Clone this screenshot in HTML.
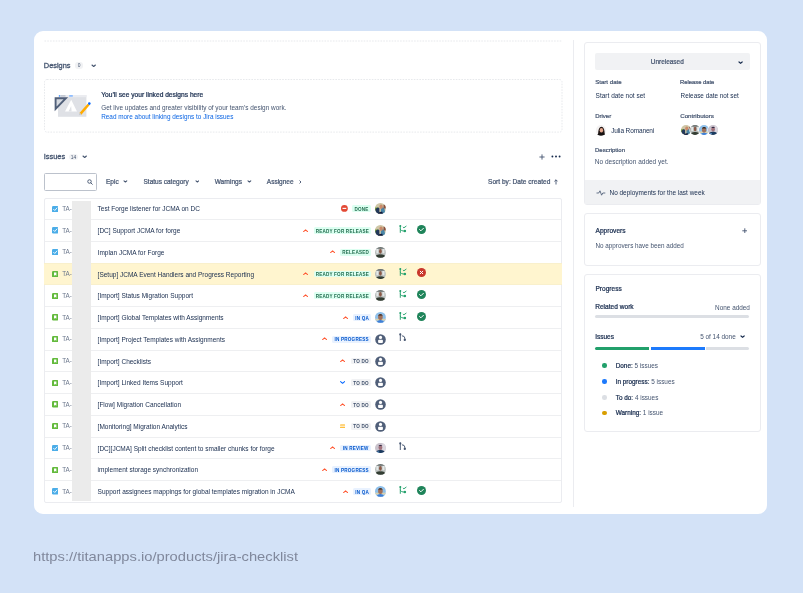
<!DOCTYPE html>
<html><head><meta charset="utf-8"><style>
html,body{margin:0;padding:0}
body{width:803px;height:593px;overflow:hidden;background:#d3e2f7;position:relative;font-family:"Liberation Sans",sans-serif}
#w{position:absolute;left:0;top:0;width:803px;height:593px;will-change:transform}
.t{position:absolute;white-space:nowrap}
svg{display:block}
</style></head><body><div id="w">
<div style="position:absolute;left:33.50px;top:30.80px;width:733.80px;height:483.20px;background:#fff;border-radius:9px"></div>
<svg style="position:absolute;left:44.00px;top:39.50px" width="518" height="2" viewBox="0 0 518 2"><path d="M0.5 1 H517.6" stroke="#e4e6ea" stroke-width="0.9" stroke-dasharray="1.6 1.2"/></svg>
<div style="position:absolute;left:573.20px;top:39.90px;width:1.00px;height:466.90px;background:#ebecf0"></div>
<div class="t" style="left:43.80px;top:61.74px;font-size:7.4px;line-height:7.4px;font-weight:400;-webkit-text-stroke:0.22px #44546f;color:#44546f;-webkit-text-stroke-width:0.3px">Designs</div>
<div style="position:absolute;left:75.20px;top:62.00px;width:7.80px;height:7.20px;background:#f1f2f4;border-radius:3px"></div>
<div class="t" style="left:79.10px;transform:translateX(-50%);top:64.45px;font-size:4.9px;line-height:4.9px;font-weight:400;color:#44546f;">0</div>
<svg style="position:absolute;left:90.70px;top:62.90px" width="5.4" height="5.4" viewBox="0 0 5.4 5.4"><path d="M1 2.02 L2.7 3.448 L4.4 2.02" fill="none" stroke="#44546f" stroke-width="1.15" stroke-linecap="round" stroke-linejoin="round"/></svg>
<svg style="position:absolute;left:44.00px;top:79.00px" width="519" height="54" viewBox="0 0 519 54"><rect x="0.5" y="0.5" width="517.5" height="52.6" rx="2.5" fill="none" stroke="#e4e6ea" stroke-width="0.9" stroke-dasharray="1.6 1.2"/></svg>
<svg style="position:absolute;left:54.00px;top:93.00px" width="38" height="26" viewBox="0 0 38 26">
<rect x="4" y="2" width="28.4" height="21.8" fill="#dfe1e6"/>
<rect x="4" y="2" width="28.4" height="2.2" fill="#ebecf0"/>
<rect x="5" y="2.1" width="1.2" height="1.6" fill="#4c9aff"/>
<rect x="6.5" y="2.1" width="5" height="1.6" fill="#c1c7d0"/>
<rect x="15.2" y="2.1" width="3.6" height="1.6" fill="#85b8ff"/>
<path d="M1.6 5.2 L11.9 5.2 L1.6 15.8 Z" fill="#d5d9e0" stroke="#505f79" stroke-width="1.9" stroke-linejoin="miter"/>
<path d="M11 18.5 L17.2 6.8 L23 18.5 Z" fill="#fff"/>
<path d="M14.5 18.5 L17.2 13 L17.6 18.5Z" fill="#dfe1e6"/>
<path d="M26.4 20.8 L34.6 11.5" stroke="#ffab00" stroke-width="2.5" stroke-linecap="butt"/>
<path d="M25.5 21.8 L26.6 20.6" stroke="#c1c7d0" stroke-width="1.5"/>
<circle cx="35.3" cy="10.6" r="1.3" fill="#0065ff"/>
</svg>
<div class="t" style="left:101.20px;top:91.77px;font-size:6.65px;line-height:6.65px;font-weight:400;-webkit-text-stroke:0.22px #172b4d;color:#172b4d;">You’ll see your linked designs here</div>
<div class="t" style="left:101.20px;top:104.94px;font-size:6.45px;line-height:6.45px;font-weight:400;color:#44546f;">Get live updates and greater visibility of your team’s design work.</div>
<div class="t" style="left:101.20px;top:113.78px;font-size:6.4px;line-height:6.4px;font-weight:400;color:#0c66e4;">Read more about linking designs to Jira issues</div>
<div class="t" style="left:43.80px;top:153.34px;font-size:7.4px;line-height:7.4px;font-weight:400;-webkit-text-stroke:0.22px #44546f;color:#44546f;-webkit-text-stroke-width:0.3px">Issues</div>
<div style="position:absolute;left:69.10px;top:153.60px;width:8.70px;height:6.70px;background:#f1f2f4;border-radius:3px"></div>
<div class="t" style="left:73.45px;transform:translateX(-50%);top:155.65px;font-size:4.9px;line-height:4.9px;font-weight:400;color:#44546f;">14</div>
<svg style="position:absolute;left:82.30px;top:154.10px" width="5.4" height="5.4" viewBox="0 0 5.4 5.4"><path d="M1 2.02 L2.7 3.448 L4.4 2.02" fill="none" stroke="#44546f" stroke-width="1.15" stroke-linecap="round" stroke-linejoin="round"/></svg>
<svg style="position:absolute;left:538.60px;top:154.00px" width="6" height="6" viewBox="0 0 6 6"><path d="M3 0.4 V5.6 M0.4 3 H5.6" stroke="#44546f" stroke-width="0.9"/></svg>
<svg style="position:absolute;left:550.50px;top:155.00px" width="10" height="3" viewBox="0 0 10 3"><circle cx="1.4" cy="1.5" r="0.95" fill="#172b4d"/><circle cx="5" cy="1.5" r="0.95" fill="#172b4d"/><circle cx="8.6" cy="1.5" r="0.95" fill="#172b4d"/></svg>
<div style="position:absolute;left:44.10px;top:173.10px;width:52.90px;height:17.50px;border:1.2px solid #bcc2cc;border-radius:1.5px;box-sizing:border-box"></div>
<svg style="position:absolute;left:86.80px;top:178.90px" width="6" height="6" viewBox="0 0 6 6"><circle cx="2.5" cy="2.5" r="1.75" fill="none" stroke="#505f79" stroke-width="1.0"/><path d="M3.8 3.8 L5.3 5.3" stroke="#505f79" stroke-width="1.0" stroke-linecap="round"/></svg>
<div class="t" style="left:106.00px;top:179.10px;font-size:6.5px;line-height:6.5px;font-weight:400;-webkit-text-stroke:0.22px #44546f;color:#44546f;">Epic</div>
<svg style="position:absolute;left:123.30px;top:179.40px" width="4.8" height="4.8" viewBox="0 0 4.8 4.8"><path d="M1 1.8399999999999999 L2.4 3.016 L3.8 1.8399999999999999" fill="none" stroke="#44546f" stroke-width="1.05" stroke-linecap="round" stroke-linejoin="round"/></svg>
<div class="t" style="left:143.50px;top:179.10px;font-size:6.5px;line-height:6.5px;font-weight:400;-webkit-text-stroke:0.22px #44546f;color:#44546f;">Status category</div>
<svg style="position:absolute;left:194.50px;top:179.40px" width="4.8" height="4.8" viewBox="0 0 4.8 4.8"><path d="M1 1.8399999999999999 L2.4 3.016 L3.8 1.8399999999999999" fill="none" stroke="#44546f" stroke-width="1.05" stroke-linecap="round" stroke-linejoin="round"/></svg>
<div class="t" style="left:214.70px;top:179.10px;font-size:6.5px;line-height:6.5px;font-weight:400;-webkit-text-stroke:0.22px #44546f;color:#44546f;">Warnings</div>
<svg style="position:absolute;left:246.80px;top:179.40px" width="4.8" height="4.8" viewBox="0 0 4.8 4.8"><path d="M1 1.8399999999999999 L2.4 3.016 L3.8 1.8399999999999999" fill="none" stroke="#44546f" stroke-width="1.05" stroke-linecap="round" stroke-linejoin="round"/></svg>
<div class="t" style="left:266.80px;top:179.10px;font-size:6.5px;line-height:6.5px;font-weight:400;-webkit-text-stroke:0.22px #44546f;color:#44546f;">Assignee</div>
<svg style="position:absolute;left:299.20px;top:179.80px" width="3" height="4" viewBox="0 0 3 4"><path d="M0.8 0.8 L2 2 L0.8 3.2" fill="none" stroke="#44546f" stroke-width="0.9" stroke-linecap="round"/></svg>
<div class="t" style="right:252.70px;top:179.01px;font-size:6.6px;line-height:6.6px;font-weight:400;-webkit-text-stroke:0.22px #44546f;color:#44546f;">Sort by: Date created</div>
<svg style="position:absolute;left:554.00px;top:178.80px" width="4" height="6" viewBox="0 0 4 6"><path d="M2 5.5 V0.8 M0.4 2.4 L2 0.8 L3.6 2.4" fill="none" stroke="#44546f" stroke-width="0.9"/></svg>
<div style="position:absolute;left:44.30px;top:197.90px;width:517.70px;height:304.70px;border:1px solid #ebecf0;box-sizing:border-box;border-radius:2px"></div>
<svg style="position:absolute;left:51.70px;top:205.58px" width="6.4" height="6.4" viewBox="0 0 6.4 6.4"><rect width="6.4" height="6.4" rx="1.2" fill="#4bade8"/><path d="M1.6 3.3 L2.8 4.5 L4.9 2" fill="none" stroke="#fff" stroke-width="0.9" stroke-linecap="round" stroke-linejoin="round"/></svg>
<div class="t" style="left:62.20px;top:205.84px;font-size:6.3px;line-height:6.3px;font-weight:400;color:#6b778c;">TA-</div>
<div class="t" style="left:97.60px;top:206.27px;font-size:6.5px;line-height:6.5px;font-weight:400;color:#172b4d;">Test Forge listener for JCMA on DC</div>
<div style="position:absolute;left:352.00px;top:205.38px;width:18.70px;height:6.80px;background:#dcfff1;border-radius:1.5px"></div>
<div class="t" style="left:361.45px;transform:translateX(-50%);top:207.83px;font-size:4.6px;line-height:4.6px;font-weight:700;color:#216e4e;letter-spacing:0.2px">DONE</div>
<svg style="position:absolute;left:341.10px;top:205.38px" width="6.8" height="6.8" viewBox="0 0 6.8 6.8"><circle cx="3.4" cy="3.4" r="3.4" fill="#e34935"/><rect x="1.5" y="2.85" width="3.8" height="1.1" fill="#fff"/></svg>
<div style="position:absolute;left:375.00px;top:203.28px;width:10.8px;height:10.8px;border-radius:50%;overflow:hidden"><svg width="10.8" height="10.8" viewBox="0 0 12 12" preserveAspectRatio="none"><rect width="12" height="12" fill="#cfc6a6"/><rect x="0" y="5" width="3.5" height="3.5" fill="#79a040"/><path d="M0.5 7 Q2.5 4 4.8 5.5 L5 12 H0 Z" fill="#23395a"/><path d="M6.5 5 Q9 4 10.5 6 L11.5 12 H6.5 Z" fill="#4a86a8"/><ellipse cx="6.8" cy="4.2" rx="1.9" ry="2.4" fill="#c98a6a"/><path d="M3 12 Q5 9 8 9.8 L9 12 Z" fill="#121a3a"/><rect x="9.5" y="2" width="2.5" height="4" fill="#8a5040"/></svg></div>
<div style="position:absolute;left:45.30px;top:219.15px;width:515.70px;height:1.00px;background:#eeeff1"></div>
<svg style="position:absolute;left:51.70px;top:227.33px" width="6.4" height="6.4" viewBox="0 0 6.4 6.4"><rect width="6.4" height="6.4" rx="1.2" fill="#4bade8"/><path d="M1.6 3.3 L2.8 4.5 L4.9 2" fill="none" stroke="#fff" stroke-width="0.9" stroke-linecap="round" stroke-linejoin="round"/></svg>
<div class="t" style="left:62.20px;top:227.59px;font-size:6.3px;line-height:6.3px;font-weight:400;color:#6b778c;">TA-</div>
<div class="t" style="left:97.60px;top:228.02px;font-size:6.5px;line-height:6.5px;font-weight:400;color:#172b4d;">[DC] Support JCMA for forge</div>
<div style="position:absolute;left:313.70px;top:227.12px;width:57.00px;height:6.80px;background:#dcfff1;border-radius:1.5px"></div>
<div class="t" style="left:342.30px;transform:translateX(-50%);top:229.58px;font-size:4.6px;line-height:4.6px;font-weight:700;color:#216e4e;letter-spacing:0.2px">READY FOR RELEASE</div>
<svg style="position:absolute;left:303.00px;top:228.53px" width="5.2" height="3.2" viewBox="0 0 5.2 3.2"><path d="M0.6 2.6 L2.6 0.9 L4.6 2.6" fill="none" stroke="#ff5630" stroke-width="1.05" stroke-linecap="round" stroke-linejoin="round"/></svg>
<div style="position:absolute;left:375.00px;top:225.03px;width:10.8px;height:10.8px;border-radius:50%;overflow:hidden"><svg width="10.8" height="10.8" viewBox="0 0 12 12" preserveAspectRatio="none"><rect width="12" height="12" fill="#cfc6a6"/><rect x="0" y="5" width="3.5" height="3.5" fill="#79a040"/><path d="M0.5 7 Q2.5 4 4.8 5.5 L5 12 H0 Z" fill="#23395a"/><path d="M6.5 5 Q9 4 10.5 6 L11.5 12 H6.5 Z" fill="#4a86a8"/><ellipse cx="6.8" cy="4.2" rx="1.9" ry="2.4" fill="#c98a6a"/><path d="M3 12 Q5 9 8 9.8 L9 12 Z" fill="#121a3a"/><rect x="9.5" y="2" width="2.5" height="4" fill="#8a5040"/></svg></div>
<svg style="position:absolute;left:399.00px;top:224.53px" width="8" height="9" viewBox="0 0 8 9"><g fill="none" stroke="#22a06b" stroke-width="0.95" stroke-linecap="round"><path d="M1.3 1 V7.4"/><path d="M1.3 4.2 Q1.5 6.1 5.6 6.1"/><path d="M4.2 2.2 L4.9 2.8 L7.1 1.2"/></g><circle cx="1.3" cy="1.0" r="1.0" fill="#22a06b"/><circle cx="5.9" cy="6.1" r="1.25" fill="#22a06b"/></svg>
<svg style="position:absolute;left:417.30px;top:224.72px" width="9" height="9" viewBox="0 0 9 9"><circle cx="4.5" cy="4.5" r="4.5" fill="#1f845a"/><path d="M2.6 4.6 L3.9 5.8 L6.4 3.3" fill="none" stroke="#fff" stroke-width="1" stroke-linecap="round" stroke-linejoin="round"/></svg>
<div style="position:absolute;left:45.30px;top:240.90px;width:515.70px;height:1.00px;background:#eeeff1"></div>
<svg style="position:absolute;left:51.70px;top:249.07px" width="6.4" height="6.4" viewBox="0 0 6.4 6.4"><rect width="6.4" height="6.4" rx="1.2" fill="#4bade8"/><path d="M1.6 3.3 L2.8 4.5 L4.9 2" fill="none" stroke="#fff" stroke-width="0.9" stroke-linecap="round" stroke-linejoin="round"/></svg>
<div class="t" style="left:62.20px;top:249.34px;font-size:6.3px;line-height:6.3px;font-weight:400;color:#6b778c;">TA-</div>
<div class="t" style="left:97.60px;top:249.77px;font-size:6.5px;line-height:6.5px;font-weight:400;color:#172b4d;">Implan JCMA for Forge</div>
<div style="position:absolute;left:340.40px;top:248.87px;width:30.30px;height:6.80px;background:#dcfff1;border-radius:1.5px"></div>
<div class="t" style="left:355.65px;transform:translateX(-50%);top:251.33px;font-size:4.6px;line-height:4.6px;font-weight:700;color:#216e4e;letter-spacing:0.2px">RELEASED</div>
<svg style="position:absolute;left:329.70px;top:250.27px" width="5.2" height="3.2" viewBox="0 0 5.2 3.2"><path d="M0.6 2.6 L2.6 0.9 L4.6 2.6" fill="none" stroke="#ff5630" stroke-width="1.05" stroke-linecap="round" stroke-linejoin="round"/></svg>
<div style="position:absolute;left:375.00px;top:246.77px;width:10.8px;height:10.8px;border-radius:50%;overflow:hidden"><svg width="10.8" height="10.8" viewBox="0 0 12 12" preserveAspectRatio="none"><rect width="12" height="12" fill="#b8bdbb"/><rect x="1.5" y="1" width="2.2" height="6" fill="#e4e8e8"/><rect x="8.3" y="1" width="2.2" height="6" fill="#e4e8e8"/><rect x="0" y="0" width="12" height="2" fill="#6f7674"/><ellipse cx="6" cy="4.8" rx="1.5" ry="2.6" fill="#8c5a48"/><path d="M0 12 Q1 8 6 8.2 Q11 8 12 12 Z" fill="#333d33"/></svg></div>
<div style="position:absolute;left:44.30px;top:262.75px;width:517.70px;height:22.55px;background:#fff5cf;box-shadow:inset 0 0.6px 0 #f4ecca, inset 0 -0.6px 0 #f4ecca"></div>
<svg style="position:absolute;left:51.70px;top:270.82px" width="6.4" height="6.4" viewBox="0 0 6.4 6.4"><rect width="6.4" height="6.4" rx="1.2" fill="#63ba3c"/><path d="M2 1.6 H4.4 V4.8 L3.2 4 L2 4.8 Z" fill="#fff"/></svg>
<div class="t" style="left:62.20px;top:271.09px;font-size:6.3px;line-height:6.3px;font-weight:400;color:#6b778c;">TA-</div>
<div class="t" style="left:97.60px;top:271.52px;font-size:6.5px;line-height:6.5px;font-weight:400;color:#172b4d;">[Setup] JCMA Event Handlers and Progress Reporting</div>
<div style="position:absolute;left:313.70px;top:270.62px;width:57.00px;height:6.80px;background:#dcfff1;border-radius:1.5px"></div>
<div class="t" style="left:342.30px;transform:translateX(-50%);top:273.08px;font-size:4.6px;line-height:4.6px;font-weight:700;color:#216e4e;letter-spacing:0.2px">READY FOR RELEASE</div>
<svg style="position:absolute;left:303.00px;top:272.02px" width="5.2" height="3.2" viewBox="0 0 5.2 3.2"><path d="M0.6 2.6 L2.6 0.9 L4.6 2.6" fill="none" stroke="#ff5630" stroke-width="1.05" stroke-linecap="round" stroke-linejoin="round"/></svg>
<div style="position:absolute;left:375.00px;top:268.52px;width:10.8px;height:10.8px;border-radius:50%;overflow:hidden"><svg width="10.8" height="10.8" viewBox="0 0 12 12" preserveAspectRatio="none"><rect width="12" height="12" fill="#b8bdbb"/><rect x="1.5" y="1" width="2.2" height="6" fill="#e4e8e8"/><rect x="8.3" y="1" width="2.2" height="6" fill="#e4e8e8"/><rect x="0" y="0" width="12" height="2" fill="#6f7674"/><ellipse cx="6" cy="4.8" rx="1.5" ry="2.6" fill="#8c5a48"/><path d="M0 12 Q1 8 6 8.2 Q11 8 12 12 Z" fill="#333d33"/></svg></div>
<svg style="position:absolute;left:399.00px;top:268.02px" width="8" height="9" viewBox="0 0 8 9"><g fill="none" stroke="#22a06b" stroke-width="0.95" stroke-linecap="round"><path d="M1.3 1 V7.4"/><path d="M1.3 4.2 Q1.5 6.1 5.6 6.1"/><path d="M4.2 2.2 L4.9 2.8 L7.1 1.2"/></g><circle cx="1.3" cy="1.0" r="1.0" fill="#22a06b"/><circle cx="5.9" cy="6.1" r="1.25" fill="#22a06b"/></svg>
<svg style="position:absolute;left:417.30px;top:268.22px" width="9" height="9" viewBox="0 0 9 9"><circle cx="4.5" cy="4.5" r="4.5" fill="#c9372c"/><path d="M3.2 3.2 L5.8 5.8 M5.8 3.2 L3.2 5.8" fill="none" stroke="#fff" stroke-width="1" stroke-linecap="round"/></svg>
<svg style="position:absolute;left:51.70px;top:292.57px" width="6.4" height="6.4" viewBox="0 0 6.4 6.4"><rect width="6.4" height="6.4" rx="1.2" fill="#63ba3c"/><path d="M2 1.6 H4.4 V4.8 L3.2 4 L2 4.8 Z" fill="#fff"/></svg>
<div class="t" style="left:62.20px;top:292.84px;font-size:6.3px;line-height:6.3px;font-weight:400;color:#6b778c;">TA-</div>
<div class="t" style="left:97.60px;top:293.27px;font-size:6.5px;line-height:6.5px;font-weight:400;color:#172b4d;">[Import] Status Migration Support</div>
<div style="position:absolute;left:313.70px;top:292.38px;width:57.00px;height:6.80px;background:#dcfff1;border-radius:1.5px"></div>
<div class="t" style="left:342.30px;transform:translateX(-50%);top:294.83px;font-size:4.6px;line-height:4.6px;font-weight:700;color:#216e4e;letter-spacing:0.2px">READY FOR RELEASE</div>
<svg style="position:absolute;left:303.00px;top:293.77px" width="5.2" height="3.2" viewBox="0 0 5.2 3.2"><path d="M0.6 2.6 L2.6 0.9 L4.6 2.6" fill="none" stroke="#ff5630" stroke-width="1.05" stroke-linecap="round" stroke-linejoin="round"/></svg>
<div style="position:absolute;left:375.00px;top:290.27px;width:10.8px;height:10.8px;border-radius:50%;overflow:hidden"><svg width="10.8" height="10.8" viewBox="0 0 12 12" preserveAspectRatio="none"><rect width="12" height="12" fill="#b8bdbb"/><rect x="1.5" y="1" width="2.2" height="6" fill="#e4e8e8"/><rect x="8.3" y="1" width="2.2" height="6" fill="#e4e8e8"/><rect x="0" y="0" width="12" height="2" fill="#6f7674"/><ellipse cx="6" cy="4.8" rx="1.5" ry="2.6" fill="#8c5a48"/><path d="M0 12 Q1 8 6 8.2 Q11 8 12 12 Z" fill="#333d33"/></svg></div>
<svg style="position:absolute;left:399.00px;top:289.77px" width="8" height="9" viewBox="0 0 8 9"><g fill="none" stroke="#22a06b" stroke-width="0.95" stroke-linecap="round"><path d="M1.3 1 V7.4"/><path d="M1.3 4.2 Q1.5 6.1 5.6 6.1"/><path d="M4.2 2.2 L4.9 2.8 L7.1 1.2"/></g><circle cx="1.3" cy="1.0" r="1.0" fill="#22a06b"/><circle cx="5.9" cy="6.1" r="1.25" fill="#22a06b"/></svg>
<svg style="position:absolute;left:417.30px;top:289.97px" width="9" height="9" viewBox="0 0 9 9"><circle cx="4.5" cy="4.5" r="4.5" fill="#1f845a"/><path d="M2.6 4.6 L3.9 5.8 L6.4 3.3" fill="none" stroke="#fff" stroke-width="1" stroke-linecap="round" stroke-linejoin="round"/></svg>
<div style="position:absolute;left:45.30px;top:306.15px;width:515.70px;height:1.00px;background:#eeeff1"></div>
<svg style="position:absolute;left:51.70px;top:314.32px" width="6.4" height="6.4" viewBox="0 0 6.4 6.4"><rect width="6.4" height="6.4" rx="1.2" fill="#63ba3c"/><path d="M2 1.6 H4.4 V4.8 L3.2 4 L2 4.8 Z" fill="#fff"/></svg>
<div class="t" style="left:62.20px;top:314.59px;font-size:6.3px;line-height:6.3px;font-weight:400;color:#6b778c;">TA-</div>
<div class="t" style="left:97.60px;top:315.02px;font-size:6.5px;line-height:6.5px;font-weight:400;color:#172b4d;">[Import] Global Templates with Assignments</div>
<div style="position:absolute;left:353.30px;top:314.12px;width:17.40px;height:6.80px;background:#e9f2ff;border-radius:1.5px"></div>
<div class="t" style="left:362.10px;transform:translateX(-50%);top:316.58px;font-size:4.6px;line-height:4.6px;font-weight:700;color:#0055cc;letter-spacing:0.2px">IN QA</div>
<svg style="position:absolute;left:342.60px;top:315.52px" width="5.2" height="3.2" viewBox="0 0 5.2 3.2"><path d="M0.6 2.6 L2.6 0.9 L4.6 2.6" fill="none" stroke="#ff5630" stroke-width="1.05" stroke-linecap="round" stroke-linejoin="round"/></svg>
<div style="position:absolute;left:375.00px;top:312.02px;width:10.8px;height:10.8px;border-radius:50%;overflow:hidden"><svg width="10.8" height="10.8" viewBox="0 0 12 12" preserveAspectRatio="none"><rect width="12" height="12" fill="#8fc0ea"/><rect y="7.5" width="12" height="2" fill="#d9d2b0"/><ellipse cx="6" cy="5.6" rx="2.6" ry="3.3" fill="#a0705a"/><path d="M3.3 4 Q6 0.8 8.7 4 Z" fill="#2a2420"/><path d="M1.5 12 Q3 8.8 6 9 Q9 8.8 10.5 12 Z" fill="#3f7fd6"/></svg></div>
<svg style="position:absolute;left:399.00px;top:311.52px" width="8" height="9" viewBox="0 0 8 9"><g fill="none" stroke="#22a06b" stroke-width="0.95" stroke-linecap="round"><path d="M1.3 1 V7.4"/><path d="M1.3 4.2 Q1.5 6.1 5.6 6.1"/><path d="M4.2 2.2 L4.9 2.8 L7.1 1.2"/></g><circle cx="1.3" cy="1.0" r="1.0" fill="#22a06b"/><circle cx="5.9" cy="6.1" r="1.25" fill="#22a06b"/></svg>
<svg style="position:absolute;left:417.30px;top:311.72px" width="9" height="9" viewBox="0 0 9 9"><circle cx="4.5" cy="4.5" r="4.5" fill="#1f845a"/><path d="M2.6 4.6 L3.9 5.8 L6.4 3.3" fill="none" stroke="#fff" stroke-width="1" stroke-linecap="round" stroke-linejoin="round"/></svg>
<div style="position:absolute;left:45.30px;top:327.90px;width:515.70px;height:1.00px;background:#eeeff1"></div>
<svg style="position:absolute;left:51.70px;top:336.07px" width="6.4" height="6.4" viewBox="0 0 6.4 6.4"><rect width="6.4" height="6.4" rx="1.2" fill="#63ba3c"/><path d="M2 1.6 H4.4 V4.8 L3.2 4 L2 4.8 Z" fill="#fff"/></svg>
<div class="t" style="left:62.20px;top:336.34px;font-size:6.3px;line-height:6.3px;font-weight:400;color:#6b778c;">TA-</div>
<div class="t" style="left:97.60px;top:336.77px;font-size:6.5px;line-height:6.5px;font-weight:400;color:#172b4d;">[Import] Project Templates with Assignments</div>
<div style="position:absolute;left:332.40px;top:335.88px;width:38.30px;height:6.80px;background:#e9f2ff;border-radius:1.5px"></div>
<div class="t" style="left:351.65px;transform:translateX(-50%);top:338.33px;font-size:4.6px;line-height:4.6px;font-weight:700;color:#0055cc;letter-spacing:0.2px">IN PROGRESS</div>
<svg style="position:absolute;left:321.70px;top:337.27px" width="5.2" height="3.2" viewBox="0 0 5.2 3.2"><path d="M0.6 2.6 L2.6 0.9 L4.6 2.6" fill="none" stroke="#ff5630" stroke-width="1.05" stroke-linecap="round" stroke-linejoin="round"/></svg>
<svg style="position:absolute;left:375.00px;top:333.77px" width="11" height="11" viewBox="0 0 11 11"><circle cx="5.5" cy="5.5" r="5.3" fill="#505f79"/><circle cx="5.5" cy="3.4" r="1.6" fill="#fff"/><rect x="3.1" y="5.7" width="4.8" height="3.3" rx="0.9" fill="#fff"/></svg>
<svg style="position:absolute;left:399.00px;top:333.27px" width="8" height="9" viewBox="0 0 8 9"><g fill="none" stroke="#44546f" stroke-width="0.95" stroke-linecap="round" stroke-linejoin="round"><path d="M1.3 1.2 V7.6"/><path d="M3.3 2.8 Q5.8 3.0 5.8 5.0 V6.6"/></g><circle cx="1.3" cy="1.4" r="1.05" fill="#44546f"/><circle cx="5.8" cy="6.9" r="1.15" fill="#44546f"/></svg>
<div style="position:absolute;left:45.30px;top:349.65px;width:515.70px;height:1.00px;background:#eeeff1"></div>
<svg style="position:absolute;left:51.70px;top:357.82px" width="6.4" height="6.4" viewBox="0 0 6.4 6.4"><rect width="6.4" height="6.4" rx="1.2" fill="#63ba3c"/><path d="M2 1.6 H4.4 V4.8 L3.2 4 L2 4.8 Z" fill="#fff"/></svg>
<div class="t" style="left:62.20px;top:358.09px;font-size:6.3px;line-height:6.3px;font-weight:400;color:#6b778c;">TA-</div>
<div class="t" style="left:97.60px;top:358.52px;font-size:6.5px;line-height:6.5px;font-weight:400;color:#172b4d;">[Import] Checklists</div>
<div style="position:absolute;left:351.00px;top:357.62px;width:19.70px;height:6.80px;background:#f1f2f4;border-radius:1.5px"></div>
<div class="t" style="left:360.95px;transform:translateX(-50%);top:360.08px;font-size:4.6px;line-height:4.6px;font-weight:700;color:#44546f;letter-spacing:0.2px">TO DO</div>
<svg style="position:absolute;left:340.30px;top:359.02px" width="5.2" height="3.2" viewBox="0 0 5.2 3.2"><path d="M0.6 2.6 L2.6 0.9 L4.6 2.6" fill="none" stroke="#ff5630" stroke-width="1.05" stroke-linecap="round" stroke-linejoin="round"/></svg>
<svg style="position:absolute;left:375.00px;top:355.52px" width="11" height="11" viewBox="0 0 11 11"><circle cx="5.5" cy="5.5" r="5.3" fill="#505f79"/><circle cx="5.5" cy="3.4" r="1.6" fill="#fff"/><rect x="3.1" y="5.7" width="4.8" height="3.3" rx="0.9" fill="#fff"/></svg>
<div style="position:absolute;left:45.30px;top:371.40px;width:515.70px;height:1.00px;background:#eeeff1"></div>
<svg style="position:absolute;left:51.70px;top:379.57px" width="6.4" height="6.4" viewBox="0 0 6.4 6.4"><rect width="6.4" height="6.4" rx="1.2" fill="#63ba3c"/><path d="M2 1.6 H4.4 V4.8 L3.2 4 L2 4.8 Z" fill="#fff"/></svg>
<div class="t" style="left:62.20px;top:379.84px;font-size:6.3px;line-height:6.3px;font-weight:400;color:#6b778c;">TA-</div>
<div class="t" style="left:97.60px;top:380.27px;font-size:6.5px;line-height:6.5px;font-weight:400;color:#172b4d;">[Import] Linked Items Support</div>
<div style="position:absolute;left:351.00px;top:379.38px;width:19.70px;height:6.80px;background:#f1f2f4;border-radius:1.5px"></div>
<div class="t" style="left:360.95px;transform:translateX(-50%);top:381.83px;font-size:4.6px;line-height:4.6px;font-weight:700;color:#44546f;letter-spacing:0.2px">TO DO</div>
<svg style="position:absolute;left:340.30px;top:381.38px" width="5.2" height="3.2" viewBox="0 0 5.2 3.2"><path d="M0.6 0.6 L2.6 2.3 L4.6 0.6" fill="none" stroke="#0065ff" stroke-width="1.05" stroke-linecap="round" stroke-linejoin="round"/></svg>
<svg style="position:absolute;left:375.00px;top:377.27px" width="11" height="11" viewBox="0 0 11 11"><circle cx="5.5" cy="5.5" r="5.3" fill="#505f79"/><circle cx="5.5" cy="3.4" r="1.6" fill="#fff"/><rect x="3.1" y="5.7" width="4.8" height="3.3" rx="0.9" fill="#fff"/></svg>
<div style="position:absolute;left:45.30px;top:393.15px;width:515.70px;height:1.00px;background:#eeeff1"></div>
<svg style="position:absolute;left:51.70px;top:401.32px" width="6.4" height="6.4" viewBox="0 0 6.4 6.4"><rect width="6.4" height="6.4" rx="1.2" fill="#63ba3c"/><path d="M2 1.6 H4.4 V4.8 L3.2 4 L2 4.8 Z" fill="#fff"/></svg>
<div class="t" style="left:62.20px;top:401.59px;font-size:6.3px;line-height:6.3px;font-weight:400;color:#6b778c;">TA-</div>
<div class="t" style="left:97.60px;top:402.02px;font-size:6.5px;line-height:6.5px;font-weight:400;color:#172b4d;">[Flow] Migration Cancellation</div>
<div style="position:absolute;left:351.00px;top:401.12px;width:19.70px;height:6.80px;background:#f1f2f4;border-radius:1.5px"></div>
<div class="t" style="left:360.95px;transform:translateX(-50%);top:403.58px;font-size:4.6px;line-height:4.6px;font-weight:700;color:#44546f;letter-spacing:0.2px">TO DO</div>
<svg style="position:absolute;left:340.30px;top:402.52px" width="5.2" height="3.2" viewBox="0 0 5.2 3.2"><path d="M0.6 2.6 L2.6 0.9 L4.6 2.6" fill="none" stroke="#ff5630" stroke-width="1.05" stroke-linecap="round" stroke-linejoin="round"/></svg>
<svg style="position:absolute;left:375.00px;top:399.02px" width="11" height="11" viewBox="0 0 11 11"><circle cx="5.5" cy="5.5" r="5.3" fill="#505f79"/><circle cx="5.5" cy="3.4" r="1.6" fill="#fff"/><rect x="3.1" y="5.7" width="4.8" height="3.3" rx="0.9" fill="#fff"/></svg>
<div style="position:absolute;left:45.30px;top:414.90px;width:515.70px;height:1.00px;background:#eeeff1"></div>
<svg style="position:absolute;left:51.70px;top:423.07px" width="6.4" height="6.4" viewBox="0 0 6.4 6.4"><rect width="6.4" height="6.4" rx="1.2" fill="#63ba3c"/><path d="M2 1.6 H4.4 V4.8 L3.2 4 L2 4.8 Z" fill="#fff"/></svg>
<div class="t" style="left:62.20px;top:423.34px;font-size:6.3px;line-height:6.3px;font-weight:400;color:#6b778c;">TA-</div>
<div class="t" style="left:97.60px;top:423.77px;font-size:6.5px;line-height:6.5px;font-weight:400;color:#172b4d;">[Monitoring] Migration Analytics</div>
<div style="position:absolute;left:351.00px;top:422.88px;width:19.70px;height:6.80px;background:#f1f2f4;border-radius:1.5px"></div>
<div class="t" style="left:360.95px;transform:translateX(-50%);top:425.33px;font-size:4.6px;line-height:4.6px;font-weight:700;color:#44546f;letter-spacing:0.2px">TO DO</div>
<svg style="position:absolute;left:340.30px;top:424.07px" width="5.2" height="4.4" viewBox="0 0 5.2 4.4"><path d="M0.5 1.1 H4.7 M0.5 3.3 H4.7" stroke="#ffab00" stroke-width="1.05" stroke-linecap="round"/></svg>
<svg style="position:absolute;left:375.00px;top:420.77px" width="11" height="11" viewBox="0 0 11 11"><circle cx="5.5" cy="5.5" r="5.3" fill="#505f79"/><circle cx="5.5" cy="3.4" r="1.6" fill="#fff"/><rect x="3.1" y="5.7" width="4.8" height="3.3" rx="0.9" fill="#fff"/></svg>
<div style="position:absolute;left:45.30px;top:436.65px;width:515.70px;height:1.00px;background:#eeeff1"></div>
<svg style="position:absolute;left:51.70px;top:444.82px" width="6.4" height="6.4" viewBox="0 0 6.4 6.4"><rect width="6.4" height="6.4" rx="1.2" fill="#4bade8"/><path d="M1.6 3.3 L2.8 4.5 L4.9 2" fill="none" stroke="#fff" stroke-width="0.9" stroke-linecap="round" stroke-linejoin="round"/></svg>
<div class="t" style="left:62.20px;top:445.09px;font-size:6.3px;line-height:6.3px;font-weight:400;color:#6b778c;">TA-</div>
<div class="t" style="left:97.60px;top:445.52px;font-size:6.5px;line-height:6.5px;font-weight:400;color:#172b4d;">[DC][JCMA] Split checklist content to smaller chunks for forge</div>
<div style="position:absolute;left:340.40px;top:444.62px;width:30.30px;height:6.80px;background:#e9f2ff;border-radius:1.5px"></div>
<div class="t" style="left:355.65px;transform:translateX(-50%);top:447.08px;font-size:4.6px;line-height:4.6px;font-weight:700;color:#0055cc;letter-spacing:0.2px">IN REVIEW</div>
<svg style="position:absolute;left:329.70px;top:446.02px" width="5.2" height="3.2" viewBox="0 0 5.2 3.2"><path d="M0.6 2.6 L2.6 0.9 L4.6 2.6" fill="none" stroke="#ff5630" stroke-width="1.05" stroke-linecap="round" stroke-linejoin="round"/></svg>
<div style="position:absolute;left:375.00px;top:442.52px;width:10.8px;height:10.8px;border-radius:50%;overflow:hidden"><svg width="10.8" height="10.8" viewBox="0 0 12 12" preserveAspectRatio="none"><rect width="12" height="12" fill="#c9c2cc"/><rect x="8" y="0" width="4" height="12" fill="#dcd8e0"/><ellipse cx="6" cy="4.9" rx="2.1" ry="2.9" fill="#a0707a"/><path d="M3.8 3.4 Q6 1 8.2 3.4 Z" fill="#2f2a44"/><path d="M0 12 Q1.5 7.6 6 7.9 Q10.5 7.6 12 12 Z" fill="#1a3a5e"/><rect x="2.5" y="9.5" width="2" height="1.5" fill="#5f9ad0"/></svg></div>
<svg style="position:absolute;left:399.00px;top:442.02px" width="8" height="9" viewBox="0 0 8 9"><g fill="none" stroke="#44546f" stroke-width="0.95" stroke-linecap="round" stroke-linejoin="round"><path d="M1.3 1.2 V7.6"/><path d="M3.3 2.8 Q5.8 3.0 5.8 5.0 V6.6"/></g><circle cx="1.3" cy="1.4" r="1.05" fill="#44546f"/><circle cx="5.8" cy="6.9" r="1.15" fill="#44546f"/></svg>
<div style="position:absolute;left:45.30px;top:458.40px;width:515.70px;height:1.00px;background:#eeeff1"></div>
<svg style="position:absolute;left:51.70px;top:466.57px" width="6.4" height="6.4" viewBox="0 0 6.4 6.4"><rect width="6.4" height="6.4" rx="1.2" fill="#63ba3c"/><path d="M2 1.6 H4.4 V4.8 L3.2 4 L2 4.8 Z" fill="#fff"/></svg>
<div class="t" style="left:62.20px;top:466.84px;font-size:6.3px;line-height:6.3px;font-weight:400;color:#6b778c;">TA-</div>
<div class="t" style="left:97.60px;top:467.27px;font-size:6.5px;line-height:6.5px;font-weight:400;color:#172b4d;">implement storage synchronization</div>
<div style="position:absolute;left:332.40px;top:466.38px;width:38.30px;height:6.80px;background:#e9f2ff;border-radius:1.5px"></div>
<div class="t" style="left:351.65px;transform:translateX(-50%);top:468.83px;font-size:4.6px;line-height:4.6px;font-weight:700;color:#0055cc;letter-spacing:0.2px">IN PROGRESS</div>
<svg style="position:absolute;left:321.70px;top:467.77px" width="5.2" height="3.2" viewBox="0 0 5.2 3.2"><path d="M0.6 2.6 L2.6 0.9 L4.6 2.6" fill="none" stroke="#ff5630" stroke-width="1.05" stroke-linecap="round" stroke-linejoin="round"/></svg>
<div style="position:absolute;left:375.00px;top:464.27px;width:10.8px;height:10.8px;border-radius:50%;overflow:hidden"><svg width="10.8" height="10.8" viewBox="0 0 12 12" preserveAspectRatio="none"><rect width="12" height="12" fill="#b8bdbb"/><rect x="1.5" y="1" width="2.2" height="6" fill="#e4e8e8"/><rect x="8.3" y="1" width="2.2" height="6" fill="#e4e8e8"/><rect x="0" y="0" width="12" height="2" fill="#6f7674"/><ellipse cx="6" cy="4.8" rx="1.5" ry="2.6" fill="#8c5a48"/><path d="M0 12 Q1 8 6 8.2 Q11 8 12 12 Z" fill="#333d33"/></svg></div>
<div style="position:absolute;left:45.30px;top:480.15px;width:515.70px;height:1.00px;background:#eeeff1"></div>
<svg style="position:absolute;left:51.70px;top:488.32px" width="6.4" height="6.4" viewBox="0 0 6.4 6.4"><rect width="6.4" height="6.4" rx="1.2" fill="#4bade8"/><path d="M1.6 3.3 L2.8 4.5 L4.9 2" fill="none" stroke="#fff" stroke-width="0.9" stroke-linecap="round" stroke-linejoin="round"/></svg>
<div class="t" style="left:62.20px;top:488.59px;font-size:6.3px;line-height:6.3px;font-weight:400;color:#6b778c;">TA-</div>
<div class="t" style="left:97.60px;top:489.02px;font-size:6.5px;line-height:6.5px;font-weight:400;color:#172b4d;">Support assignees mappings for global templates migration in JCMA</div>
<div style="position:absolute;left:353.30px;top:488.12px;width:17.40px;height:6.80px;background:#e9f2ff;border-radius:1.5px"></div>
<div class="t" style="left:362.10px;transform:translateX(-50%);top:490.58px;font-size:4.6px;line-height:4.6px;font-weight:700;color:#0055cc;letter-spacing:0.2px">IN QA</div>
<svg style="position:absolute;left:342.60px;top:489.52px" width="5.2" height="3.2" viewBox="0 0 5.2 3.2"><path d="M0.6 2.6 L2.6 0.9 L4.6 2.6" fill="none" stroke="#ff5630" stroke-width="1.05" stroke-linecap="round" stroke-linejoin="round"/></svg>
<div style="position:absolute;left:375.00px;top:486.02px;width:10.8px;height:10.8px;border-radius:50%;overflow:hidden"><svg width="10.8" height="10.8" viewBox="0 0 12 12" preserveAspectRatio="none"><rect width="12" height="12" fill="#8fc0ea"/><rect y="7.5" width="12" height="2" fill="#d9d2b0"/><ellipse cx="6" cy="5.6" rx="2.6" ry="3.3" fill="#a0705a"/><path d="M3.3 4 Q6 0.8 8.7 4 Z" fill="#2a2420"/><path d="M1.5 12 Q3 8.8 6 9 Q9 8.8 10.5 12 Z" fill="#3f7fd6"/></svg></div>
<svg style="position:absolute;left:399.00px;top:485.52px" width="8" height="9" viewBox="0 0 8 9"><g fill="none" stroke="#22a06b" stroke-width="0.95" stroke-linecap="round"><path d="M1.3 1 V7.4"/><path d="M1.3 4.2 Q1.5 6.1 5.6 6.1"/><path d="M4.2 2.2 L4.9 2.8 L7.1 1.2"/></g><circle cx="1.3" cy="1.0" r="1.0" fill="#22a06b"/><circle cx="5.9" cy="6.1" r="1.25" fill="#22a06b"/></svg>
<svg style="position:absolute;left:417.30px;top:485.72px" width="9" height="9" viewBox="0 0 9 9"><circle cx="4.5" cy="4.5" r="4.5" fill="#1f845a"/><path d="M2.6 4.6 L3.9 5.8 L6.4 3.3" fill="none" stroke="#fff" stroke-width="1" stroke-linecap="round" stroke-linejoin="round"/></svg>
<div style="position:absolute;left:72.00px;top:201.10px;width:19.00px;height:299.90px;background:#ebebeb"></div>
<div style="position:absolute;left:584.40px;top:41.70px;width:176.60px;height:163.70px;border:1px solid #ebecf0;border-radius:3px;box-sizing:border-box;overflow:hidden"></div>
<div style="position:absolute;left:595.00px;top:53.00px;width:155.00px;height:17.40px;background:#f1f2f4;border-radius:2px"></div>
<div class="t" style="left:650.80px;top:59.14px;font-size:6.45px;line-height:6.45px;font-weight:400;-webkit-text-stroke:0.22px #44546f;color:#44546f;">Unreleased</div>
<svg style="position:absolute;left:738.40px;top:59.60px" width="5.2" height="5.2" viewBox="0 0 5.2 5.2"><path d="M1 1.96 L2.6 3.304 L4.2 1.96" fill="none" stroke="#172b4d" stroke-width="1.15" stroke-linecap="round" stroke-linejoin="round"/></svg>
<div class="t" style="left:595.20px;top:79.44px;font-size:6.1px;line-height:6.1px;font-weight:400;-webkit-text-stroke:0.22px #44546f;color:#44546f;">Start date</div>
<div class="t" style="left:680.10px;top:80.49px;font-size:5.8px;line-height:5.8px;font-weight:400;-webkit-text-stroke:0.22px #44546f;color:#44546f;">Release date</div>
<div class="t" style="left:595.60px;top:93.00px;font-size:6.5px;line-height:6.5px;font-weight:400;color:#172b4d;">Start date not set</div>
<div class="t" style="left:680.60px;top:92.72px;font-size:6.35px;line-height:6.35px;font-weight:400;color:#172b4d;">Release date not set</div>
<div class="t" style="left:595.20px;top:112.92px;font-size:6.0px;line-height:6.0px;font-weight:400;-webkit-text-stroke:0.22px #44546f;color:#44546f;">Driver</div>
<div class="t" style="left:680.20px;top:112.95px;font-size:6.2px;line-height:6.2px;font-weight:400;-webkit-text-stroke:0.22px #44546f;color:#44546f;">Contributors</div>
<div style="position:absolute;left:595.70px;top:124.90px;width:10.8px;height:10.8px;border-radius:50%;overflow:hidden"><svg width="10.8" height="10.8" viewBox="0 0 12 12" preserveAspectRatio="none"><rect width="12" height="12" fill="#f4f2f2"/><path d="M2.2 11 Q2.5 2 6 2 Q9.5 2 9.8 11 Z" fill="#231815"/><ellipse cx="6" cy="5.8" rx="1.9" ry="2.5" fill="#e4a78e"/><path d="M0.5 12 Q2 9 6 9 Q10 9 11.5 12 Z" fill="#141010"/></svg></div>
<div class="t" style="left:611.20px;top:127.70px;font-size:6.5px;line-height:6.5px;font-weight:400;color:#172b4d;letter-spacing:-0.13px">Julia Romaneni</div>
<div style="position:absolute;left:680.50px;top:124.90px;width:10.2px;height:10.2px;border-radius:50%;overflow:hidden;box-shadow:0 0 0 0.7px #fff"><svg width="10.2" height="10.2" viewBox="0 0 12 12" preserveAspectRatio="none"><rect width="12" height="12" fill="#cfc6a6"/><rect x="0" y="5" width="3.5" height="3.5" fill="#79a040"/><path d="M0.5 7 Q2.5 4 4.8 5.5 L5 12 H0 Z" fill="#23395a"/><path d="M6.5 5 Q9 4 10.5 6 L11.5 12 H6.5 Z" fill="#4a86a8"/><ellipse cx="6.8" cy="4.2" rx="1.9" ry="2.4" fill="#c98a6a"/><path d="M3 12 Q5 9 8 9.8 L9 12 Z" fill="#121a3a"/><rect x="9.5" y="2" width="2.5" height="4" fill="#8a5040"/></svg></div>
<div style="position:absolute;left:689.60px;top:124.90px;width:10.2px;height:10.2px;border-radius:50%;overflow:hidden;box-shadow:0 0 0 0.7px #fff"><svg width="10.2" height="10.2" viewBox="0 0 12 12" preserveAspectRatio="none"><rect width="12" height="12" fill="#b8bdbb"/><rect x="1.5" y="1" width="2.2" height="6" fill="#e4e8e8"/><rect x="8.3" y="1" width="2.2" height="6" fill="#e4e8e8"/><rect x="0" y="0" width="12" height="2" fill="#6f7674"/><ellipse cx="6" cy="4.8" rx="1.5" ry="2.6" fill="#8c5a48"/><path d="M0 12 Q1 8 6 8.2 Q11 8 12 12 Z" fill="#333d33"/></svg></div>
<div style="position:absolute;left:698.70px;top:124.90px;width:10.2px;height:10.2px;border-radius:50%;overflow:hidden;box-shadow:0 0 0 0.7px #fff"><svg width="10.2" height="10.2" viewBox="0 0 12 12" preserveAspectRatio="none"><rect width="12" height="12" fill="#8fc0ea"/><rect y="7.5" width="12" height="2" fill="#d9d2b0"/><ellipse cx="6" cy="5.6" rx="2.6" ry="3.3" fill="#a0705a"/><path d="M3.3 4 Q6 0.8 8.7 4 Z" fill="#2a2420"/><path d="M1.5 12 Q3 8.8 6 9 Q9 8.8 10.5 12 Z" fill="#3f7fd6"/></svg></div>
<div style="position:absolute;left:707.80px;top:124.90px;width:10.2px;height:10.2px;border-radius:50%;overflow:hidden;box-shadow:0 0 0 0.7px #fff"><svg width="10.2" height="10.2" viewBox="0 0 12 12" preserveAspectRatio="none"><rect width="12" height="12" fill="#c9c2cc"/><rect x="8" y="0" width="4" height="12" fill="#dcd8e0"/><ellipse cx="6" cy="4.9" rx="2.1" ry="2.9" fill="#a0707a"/><path d="M3.8 3.4 Q6 1 8.2 3.4 Z" fill="#2f2a44"/><path d="M0 12 Q1.5 7.6 6 7.9 Q10.5 7.6 12 12 Z" fill="#1a3a5e"/><rect x="2.5" y="9.5" width="2" height="1.5" fill="#5f9ad0"/></svg></div>
<div class="t" style="left:595.00px;top:146.82px;font-size:6.0px;line-height:6.0px;font-weight:400;-webkit-text-stroke:0.22px #44546f;color:#44546f;">Description</div>
<div class="t" style="left:594.80px;top:159.10px;font-size:6.5px;line-height:6.5px;font-weight:400;color:#44546f;">No description added yet.</div>
<div style="position:absolute;left:585.40px;top:179.70px;width:174.60px;height:24.70px;background:#f1f2f4"></div>
<svg style="position:absolute;left:595.50px;top:189.50px" width="10" height="6" viewBox="0 0 10 6"><path d="M0.5 3 H2.8 L4 0.8 L5.6 5.2 L6.8 3 H9.3" fill="none" stroke="#44546f" stroke-width="0.8" stroke-linejoin="round"/></svg>
<div class="t" style="left:609.50px;top:189.94px;font-size:6.45px;line-height:6.45px;font-weight:400;color:#172b4d;">No deployments for the last week</div>
<div style="position:absolute;left:584.40px;top:213.00px;width:176.60px;height:53.40px;border:1px solid #ebecf0;border-radius:3px;box-sizing:border-box"></div>
<div class="t" style="left:595.50px;top:228.21px;font-size:6.6px;line-height:6.6px;font-weight:400;-webkit-text-stroke:0.22px #172b4d;color:#172b4d;">Approvers</div>
<svg style="position:absolute;left:741.90px;top:227.70px" width="5.6" height="5.6" viewBox="0 0 5.6 5.6"><path d="M2.8 0.3 V5.3 M0.3 2.8 H5.3" stroke="#44546f" stroke-width="0.9"/></svg>
<div class="t" style="left:595.50px;top:242.87px;font-size:6.3px;line-height:6.3px;font-weight:400;color:#44546f;">No approvers have been added</div>
<div style="position:absolute;left:584.40px;top:273.60px;width:176.60px;height:158.60px;border:1px solid #ebecf0;border-radius:3px;box-sizing:border-box"></div>
<div class="t" style="left:595.50px;top:285.66px;font-size:6.55px;line-height:6.55px;font-weight:400;-webkit-text-stroke:0.22px #172b4d;color:#172b4d;">Progress</div>
<div class="t" style="left:595.20px;top:304.01px;font-size:6.6px;line-height:6.6px;font-weight:400;-webkit-text-stroke:0.22px #172b4d;color:#172b4d;">Related work</div>
<div class="t" style="right:53.10px;top:304.78px;font-size:6.4px;line-height:6.4px;font-weight:400;color:#44546f;">None added</div>
<div style="position:absolute;left:595.20px;top:315.00px;width:153.80px;height:3.40px;background:#dcdfe4;border-radius:2px"></div>
<div class="t" style="left:595.20px;top:333.50px;font-size:6.5px;line-height:6.5px;font-weight:400;-webkit-text-stroke:0.22px #172b4d;color:#172b4d;">Issues</div>
<div class="t" style="right:67.30px;top:333.58px;font-size:6.4px;line-height:6.4px;font-weight:400;color:#44546f;">5 of 14 done</div>
<svg style="position:absolute;left:740.10px;top:334.00px" width="5.2" height="5.2" viewBox="0 0 5.2 5.2"><path d="M1 1.96 L2.6 3.304 L4.2 1.96" fill="none" stroke="#172b4d" stroke-width="1.15" stroke-linecap="round" stroke-linejoin="round"/></svg>
<div style="position:absolute;left:595.20px;top:347.10px;width:54.10px;height:3.20px;background:#22a06b;border-radius:2px 0 0 2px"></div>
<div style="position:absolute;left:650.50px;top:347.10px;width:54.30px;height:3.20px;background:#1d7afc"></div>
<div style="position:absolute;left:706.00px;top:347.10px;width:43.00px;height:3.20px;background:#dcdfe4;border-radius:0 2px 2px 0"></div>
<div style="position:absolute;left:602.35px;top:363.35px;width:4.50px;height:4.50px;background:#22a06b;border-radius:50%"></div>
<div class="t" style="left:615.70px;top:362.88px;font-size:6.4px;line-height:6.4px;font-weight:400;color:#44546f;"><span style="-webkit-text-stroke:0.22px #172b4d;color:#172b4d">Done:</span> 5 issues</div>
<div style="position:absolute;left:602.35px;top:379.35px;width:4.50px;height:4.50px;background:#1d7afc;border-radius:50%"></div>
<div class="t" style="left:615.70px;top:378.88px;font-size:6.4px;line-height:6.4px;font-weight:400;color:#44546f;"><span style="-webkit-text-stroke:0.22px #172b4d;color:#172b4d">In progress:</span> 5 issues</div>
<div style="position:absolute;left:602.35px;top:395.25px;width:4.50px;height:4.50px;background:#dcdfe4;border-radius:50%"></div>
<div class="t" style="left:615.70px;top:394.78px;font-size:6.4px;line-height:6.4px;font-weight:400;color:#44546f;"><span style="-webkit-text-stroke:0.22px #172b4d;color:#172b4d">To do:</span> 4 issues</div>
<div style="position:absolute;left:602.35px;top:410.85px;width:4.50px;height:4.50px;background:#d89e00;border-radius:50%"></div>
<div class="t" style="left:615.70px;top:410.38px;font-size:6.4px;line-height:6.4px;font-weight:400;color:#44546f;"><span style="-webkit-text-stroke:0.22px #172b4d;color:#172b4d">Warning:</span> 1 issue</div>
<div class="t" style="left:33.20px;top:549.90px;font-size:13px;line-height:13px;font-weight:400;color:#80889c;transform:scaleX(1.132);transform-origin:0 0">https://titanapps.io/products/jira-checklist</div>
</div></body></html>
